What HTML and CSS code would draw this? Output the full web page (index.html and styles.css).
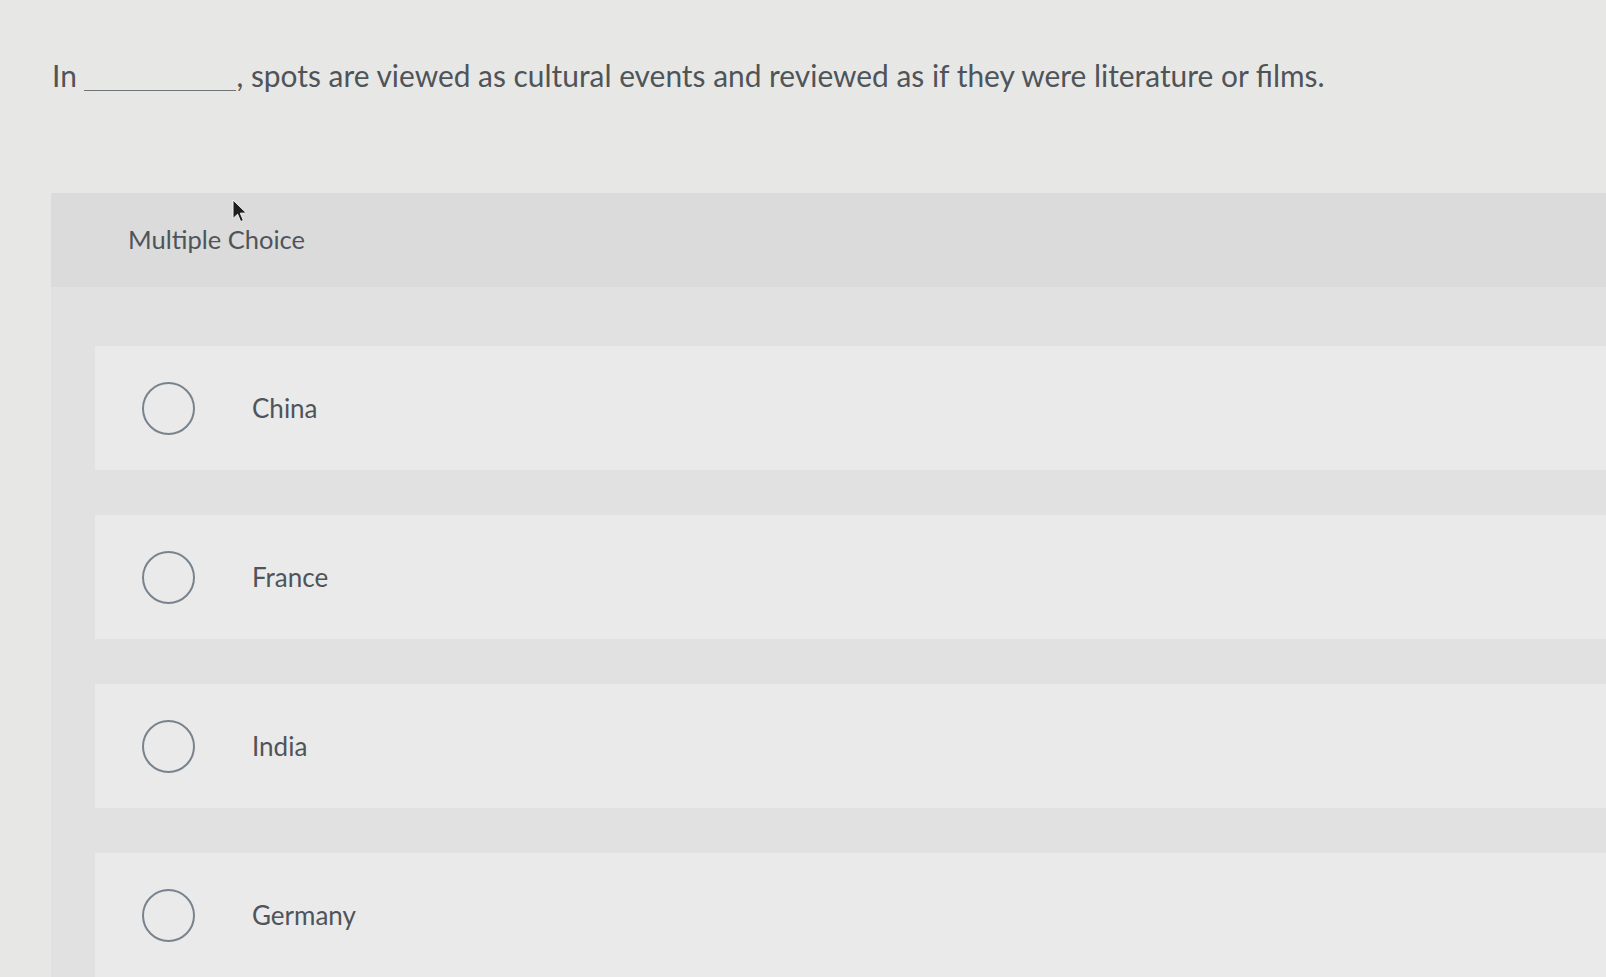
FILE: index.html
```html
<!DOCTYPE html>
<html lang="en">
<head>
<meta charset="utf-8">
<title>Multiple Choice</title>
<link rel="stylesheet" href="styles.css">
</head>
<body>
  <div class="page">
    <p class="question">In <span class="blank"></span>, spots are viewed as cultural events and reviewed as if they were literature or films.</p>

    <section class="panel">
      <header class="panel-header">Multiple Choice</header>
      <div class="options">
        <label class="option"><span class="radio"></span><span class="label">China</span></label>
        <label class="option"><span class="radio"></span><span class="label">France</span></label>
        <label class="option"><span class="radio"></span><span class="label">India</span></label>
        <label class="option"><span class="radio"></span><span class="label">Germany</span></label>
      </div>
    </section>

    <svg class="cursor" width="16" height="25" viewBox="0 0 16 25" aria-hidden="true">
      <path d="M1 1 L1 19.5 L5.6 15.2 L8.7 22.6 L11.4 21.4 L8.3 14.2 L14.3 14 Z" fill="#1e1f22" stroke="#f2f2f2" stroke-width="1"/>
    </svg>
  </div>
</body>
</html>
```

FILE: styles.css
```css
html, body {
  margin: 0;
  padding: 0;
}

body {
  background: #e7e8e6;
  font-family: "Lato", "Open Sans", "Liberation Sans", sans-serif;
  color: #4f5459;
  width: 1606px;
  height: 977px;
  overflow: hidden;
}

.page {
  position: relative;
  height: 977px;
}

.question {
  margin: 0;
  padding: 59px 0 0 52px;
  font-size: 29.9px;
  line-height: 32px;
  height: 133px;
  box-sizing: border-box;
}

.blank {
  display: inline-block;
  width: 152px;
  border-bottom: 1.5px solid #6e737a;
  margin-left: 0;
  vertical-align: -4px;
}

.panel {
  margin: 60px 0 0 51px;
  background: #e0e1e0;
}

.panel-header {
  height: 94px;
  background: #dadbda;
  box-sizing: border-box;
  padding: 30px 0 0 77px;
  font-size: 25.5px;
  line-height: 32px;
  color: #4f545a;
}

.options {
  padding: 59px 0 0 44px;
  display: flex;
  flex-direction: column;
  gap: 45px;
}

.option {
  height: 124px;
  background: #e9eae9;
  display: flex;
  align-items: center;
  padding-left: 47px;
}

.radio {
  width: 53px;
  height: 53px;
  box-sizing: border-box;
  border: 2.5px solid #78838d;
  border-radius: 50%;
  flex: none;
}

.label {
  margin-left: 57px;
  font-size: 26px;
  color: #4f545a;
}

.cursor {
  position: absolute;
  left: 232px;
  top: 199px;
}
```
